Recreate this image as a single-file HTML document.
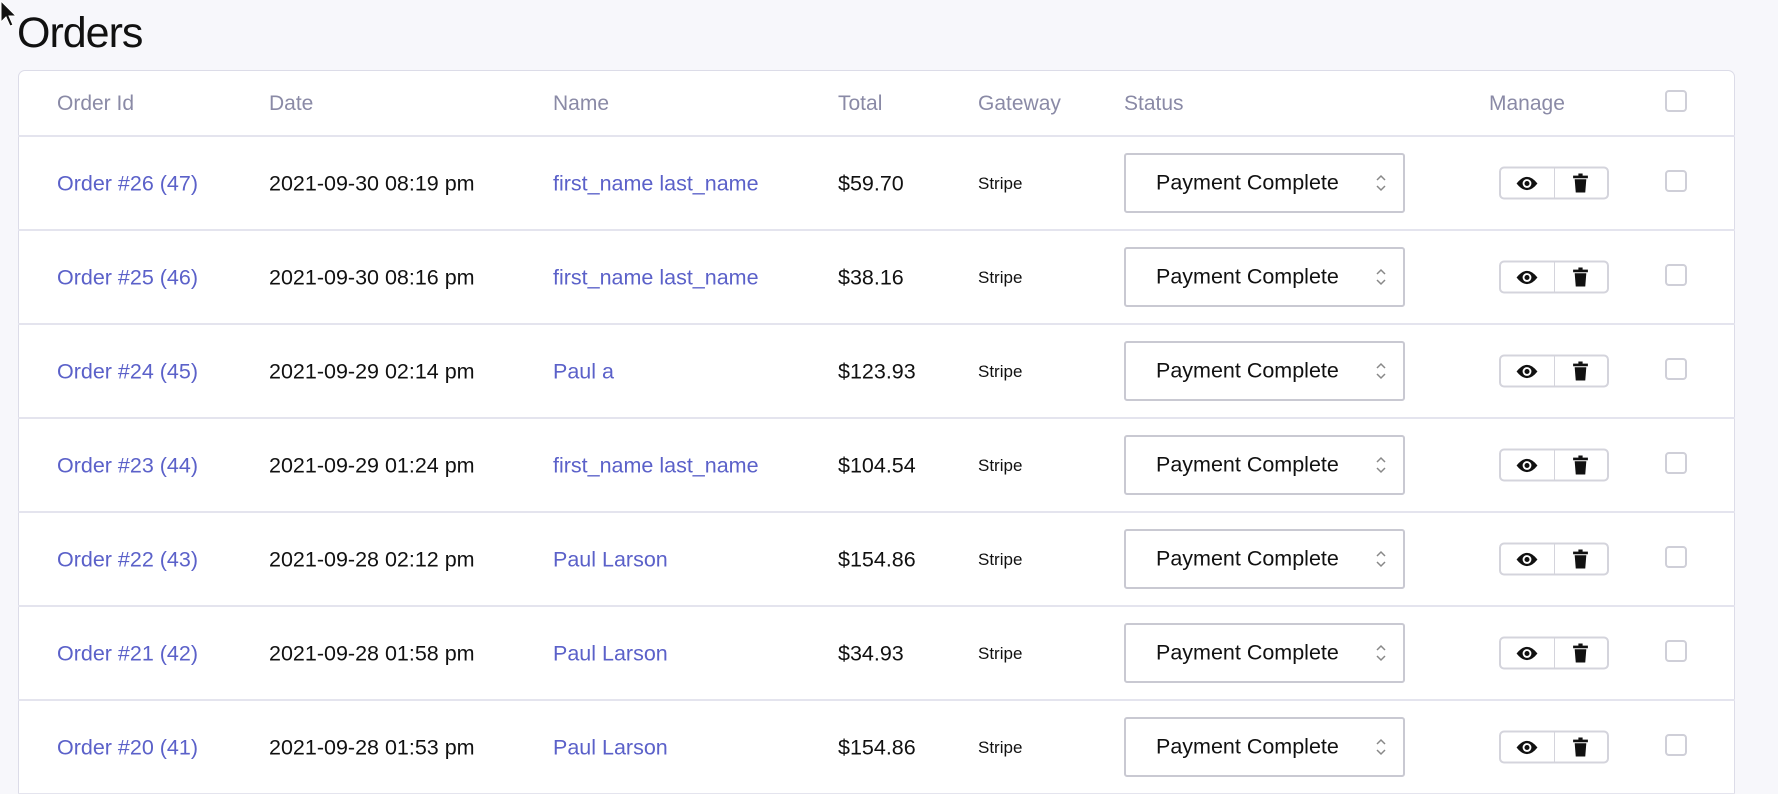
<!DOCTYPE html>
<html><head><meta charset="utf-8"><style>
*{margin:0;padding:0;box-sizing:border-box}
html,body{width:1778px;height:794px;overflow:hidden}
body{background:#f7f7fb;font-family:"Liberation Sans",sans-serif;position:relative;color:#111}
h1{position:absolute;left:17px;top:9px;font-size:43px;font-weight:400;letter-spacing:-1px;color:#111}
.card{position:absolute;left:18px;top:70px;width:1717px;height:724px;background:#fff;border:1px solid #dcdce8;border-bottom:none;border-radius:7px 7px 0 0}
.t{position:absolute;font-size:21.5px;white-space:nowrap;transform:translateY(-50%)}
.h{color:#8a8aa6;font-size:21px}
.a{color:#5b61c9}
.line{position:absolute;left:18px;width:1717px;height:2px;background:#e4e4ee}
.sel{position:absolute;left:1124px;width:281px;height:60px;border:2px solid #c9c9d2;border-radius:3px;background:#fff;transform:translateY(-50%)}
.sel span{position:absolute;left:30px;top:50%;transform:translateY(-50%);font-size:21.5px}
.sel svg{position:absolute;right:16px;top:50%;transform:translateY(-50%)}
.bg{position:absolute;left:1499px;width:110px;height:33px;border:2px solid #d4d4dc;border-radius:5px;background:#fff;transform:translateY(-50%);display:flex}
.bg div{flex:1;display:flex;align-items:center;justify-content:center}
.bg div+div{border-left:1.5px solid #d4d4dc}
.cb{position:absolute;left:1665px;width:22px;height:22px;border:2px solid #cfcfd8;border-radius:4px;background:#fff;transform:translateY(-50%)}
</style></head><body>
<svg style="position:absolute;left:0;top:0" width="22" height="30" viewBox="0 0 22 30"><path d="M1 1 L1 22 L6 17 L10 26 L13 25 L9 16 L16 16 Z" fill="#111" stroke="#fff" stroke-width="1"/></svg>
<h1>Orders</h1>
<div class="card"></div>
<div class="t h" style="left:57px;top:104px">Order Id</div>
<div class="t h" style="left:269px;top:104px">Date</div>
<div class="t h" style="left:553px;top:104px">Name</div>
<div class="t h" style="left:838px;top:104px">Total</div>
<div class="t h" style="left:978px;top:104px">Gateway</div>
<div class="t h" style="left:1124px;top:104px">Status</div>
<div class="t h" style="left:1489px;top:104px">Manage</div>
<div class="cb" style="top:101px"></div>
<div class="line" style="top:135px"></div>
<div id="rows"></div>
<script>
var d=[["Order #26 (47)","2021-09-30 08:19 pm","first_name last_name","$59.70"],
["Order #25 (46)","2021-09-30 08:16 pm","first_name last_name","$38.16"],
["Order #24 (45)","2021-09-29 02:14 pm","Paul a","$123.93"],
["Order #23 (44)","2021-09-29 01:24 pm","first_name last_name","$104.54"],
["Order #22 (43)","2021-09-28 02:12 pm","Paul Larson","$154.86"],
["Order #21 (42)","2021-09-28 01:58 pm","Paul Larson","$34.93"],
["Order #20 (41)","2021-09-28 01:53 pm","Paul Larson","$154.86"]];
var h="";
d.forEach(function(r,i){var y=183+94*i;
h+='<div class="t a" style="left:57px;top:'+(y+1)+'px">'+r[0]+'</div>';
h+='<div class="t" style="left:269px;top:'+(y+1)+'px">'+r[1]+'</div>';
h+='<div class="t a" style="left:553px;top:'+(y+1)+'px">'+r[2]+'</div>';
h+='<div class="t" style="left:838px;top:'+(y+1)+'px">'+r[3]+'</div>';
h+='<div class="t" style="left:978px;top:'+(y+1)+'px;font-size:17px">Stripe</div>';
h+='<div class="sel" style="top:'+y+'px"><span>Payment Complete</span><svg width="12" height="20" viewBox="0 0 12 20"><path d="M2 7 L6 3 L10 7 M2 13 L6 17 L10 13" fill="none" stroke="#888" stroke-width="1.5"/></svg></div>';
h+='<div class="bg" style="top:'+y+'px"><div><svg width="22" height="16" viewBox="0 0 20 14"><path d="M0.5 7 Q10 -5 19.5 7 Q10 19 0.5 7Z" fill="#111"/><circle cx="10" cy="7" r="4" fill="#fff"/><circle cx="10" cy="7" r="2.3" fill="#111"/></svg></div><div><svg width="15" height="19" viewBox="0 0 14 18"><rect x="0" y="2" width="14" height="2.5" fill="#111"/><rect x="5" y="0" width="4" height="3" fill="#111"/><path d="M1.5 5.5 H12.5 L11.5 18 H2.5Z" fill="#111"/></svg></div></div>';
h+='<div class="cb" style="top:'+(y-2)+'px"></div>';
h+='<div class="line" style="top:'+(y+46)+'px"></div>';
});
document.getElementById("rows").innerHTML=h;
</script>
</body></html>
